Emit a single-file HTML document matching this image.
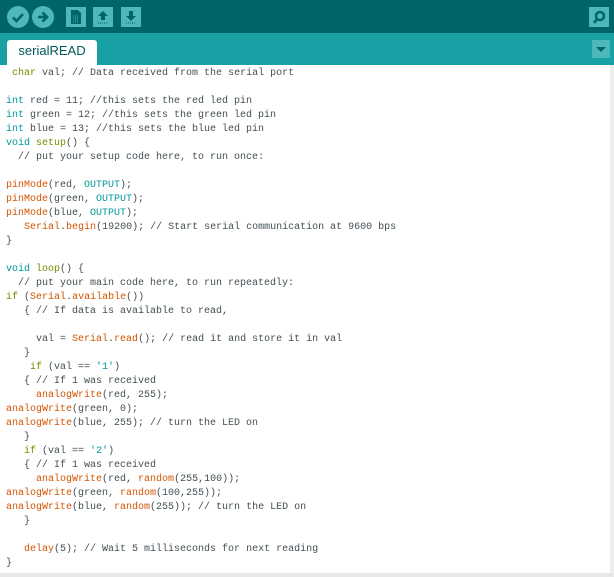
<!DOCTYPE html>
<html><head><meta charset="utf-8"><style>
body{margin:0;width:614px;height:577px;overflow:hidden;background:#fff;font-family:"Liberation Sans",sans-serif;position:relative}
.top{position:absolute;left:0;top:0;width:614px;height:33px;background:#006468}
.tabs{position:absolute;left:0;top:33px;width:614px;height:32px;background:#17A1A5}
.tab{position:absolute;left:7px;top:7px;width:90px;height:25px;background:#fff;border-radius:3px 3px 0 0;color:#00575b;font-size:13px;text-align:center;line-height:22px}
.ci{position:absolute;top:6px;width:22px;height:22px;border-radius:50%;background:#4DB7BB}
.sq{position:absolute;top:7px;width:20px;height:20px;background:#4DB7BB}
pre{position:absolute;left:6px;top:67px;margin:0;font-family:"Liberation Mono",monospace;font-size:10px;line-height:14px;color:#434f54}
.k{color:#00979C}.o{color:#728E00}.f{color:#D35400}.c{color:#434f54}
.bot{position:absolute;left:0;top:573px;width:614px;height:4px;background:#e8e8e8}
.rb{position:absolute;left:610px;top:65px;width:4px;height:512px;background:#eee}
</style></head><body>
<div class="top">
<div class="ci" style="left:7px"><svg width="22" height="22"><path d="M6 11.5l3.5 3.5 6.5-7" stroke="#006468" stroke-width="2.6" fill="none"/></svg></div>
<div class="ci" style="left:32px"><svg width="22" height="22"><path d="M6 11h8M10.5 6.5L15 11l-4.5 4.5" stroke="#006468" stroke-width="2.6" fill="none"/></svg></div>
<div class="sq" style="left:66px"><svg width="20" height="20"><path d="M5 3h7l3 3v11H5z" fill="#006468"/><path d="M7 9h6M7 11h6M7 13h6M7 15h6" stroke="#4DB7BB" stroke-width="1" stroke-dasharray="1 1"/></svg></div>
<div class="sq" style="left:93px"><svg width="20" height="20"><path d="M10 4l5 5h-3v4H8V9H5z" fill="#006468"/><path d="M5 16h10" stroke="#006468" stroke-dasharray="1 1"/></svg></div>
<div class="sq" style="left:121px"><svg width="20" height="20"><path d="M10 14l5-5h-3V4H8v5H5z" fill="#006468"/><path d="M5 16h10" stroke="#006468" stroke-dasharray="1 1"/></svg></div>
<div class="sq" style="left:589px"><svg width="20" height="20"><circle cx="11" cy="9" r="4" stroke="#006468" stroke-width="2.5" fill="none"/><path d="M8 12l-3 4" stroke="#006468" stroke-width="2.5"/></svg></div>
</div>
<div class="tabs"><div class="tab">serialREAD</div>
<div style="position:absolute;left:592px;top:7px;width:18px;height:18px;background:#4DB7BB"><svg width="18" height="18"><path d="M4 7h10l-5 5z" fill="#006468"/></svg></div></div>
<pre> <span class="o">char</span> val; // Data received from the serial port

<span class="k">int</span> red = 11; //this sets the red led pin
<span class="k">int</span> green = 12; //this sets the green led pin
<span class="k">int</span> blue = 13; //this sets the blue led pin
<span class="k">void</span> <span class="o">setup</span>() {
  // put your setup code here, to run once:

<span class="f">pinMode</span>(red, <span class="k">OUTPUT</span>);
<span class="f">pinMode</span>(green, <span class="k">OUTPUT</span>);
<span class="f">pinMode</span>(blue, <span class="k">OUTPUT</span>);
   <span class="f">Serial</span>.<span class="f">begin</span>(19200); // Start serial communication at 9600 bps
}

<span class="k">void</span> <span class="o">loop</span>() {
  // put your main code here, to run repeatedly:
<span class="o">if</span> (<span class="f">Serial</span>.<span class="f">available</span>())
   { // If data is available to read,

     val = <span class="f">Serial</span>.<span class="f">read</span>(); // read it and store it in val
   }
    <span class="o">if</span> (val == <span class="k">'1'</span>)
   { // If 1 was received
     <span class="f">analogWrite</span>(red, 255);
<span class="f">analogWrite</span>(green, 0);
<span class="f">analogWrite</span>(blue, 255); // turn the LED on
   }
   <span class="o">if</span> (val == <span class="k">'2'</span>)
   { // If 1 was received
     <span class="f">analogWrite</span>(red, <span class="f">random</span>(255,100));
<span class="f">analogWrite</span>(green, <span class="f">random</span>(100,255));
<span class="f">analogWrite</span>(blue, <span class="f">random</span>(255)); // turn the LED on
   }

   <span class="f">delay</span>(5); // Wait 5 milliseconds for next reading
}</pre>
<div class="rb"></div>
<div class="bot"></div>
</body></html>
